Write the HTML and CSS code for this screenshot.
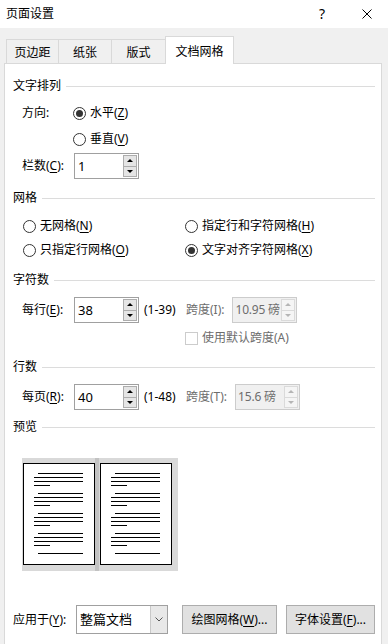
FILE: index.html
```html
<!DOCTYPE html>
<html lang="zh-CN">
<head>
    <meta charset="UTF-8">
    <title>页面设置</title>
    <link rel="stylesheet" href="styles.css">
</head>
<body>
    <div class="titlebar">
        <span class="title">页面设置</span>
        <span class="help">?</span>
        <svg class="close" width="10" height="10" viewBox="0 0 10 10"><path d="M0.5 0.5 L9.5 9.5 M9.5 0.5 L0.5 9.5" stroke="#000" stroke-width="1"/></svg>
    </div>

    <div class="tabs">
        <div class="tab tab-1">页边距</div>
        <div class="tab tab-2">纸张</div>
        <div class="tab tab-3">版式</div>
        <div class="tab tab-active">文档网格</div>
    </div>

    <div class="panel">
        <!-- 文字排列 -->
        <div class="group-title first"><span>文字排列</span><i class="rule"></i></div>
        <div class="row row-dir">
            <span class="label">方向:</span>
            <span class="radio checked"><i class="circle"></i>水平(<u>Z</u>)</span>
        </div>
        <div class="row">
            <span class="label"></span>
            <span class="radio"><i class="circle"></i>垂直(<u>V</u>)</span>
        </div>
        <div class="row row-cols">
            <span class="label">栏数(<u>C</u>):</span>
            <div class="spin">
                <span class="value">1</span>
                <span class="spin-btns"><b class="up"></b><b class="down"></b></span>
            </div>
        </div>

        <!-- 网格 -->
        <div class="group-title grid-title"><span>网格</span><i class="rule"></i></div>
        <div class="radio-row first-radio-row">
            <span class="radio col-1"><i class="circle"></i>无网格(<u>N</u>)</span>
            <span class="radio"><i class="circle"></i>指定行和字符网格(<u>H</u>)</span>
        </div>
        <div class="radio-row">
            <span class="radio col-1"><i class="circle"></i>只指定行网格(<u>O</u>)</span>
            <span class="radio checked"><i class="circle"></i>文字对齐字符网格(<u>X</u>)</span>
        </div>

        <!-- 字符数 -->
        <div class="group-title chars-title"><span>字符数</span><i class="rule"></i></div>
        <div class="row spin-row">
            <span class="label">每行(<u>E</u>):</span>
            <div class="spin">
                <span class="value">38</span>
                <span class="spin-btns"><b class="up"></b><b class="down"></b></span>
            </div>
            <span class="range">(1-39)</span>
            <span class="muted">跨度(I):</span>
            <div class="spin disabled">
                <span class="value">10.95 磅</span>
                <span class="spin-btns"><b class="up"></b><b class="down"></b></span>
            </div>
        </div>
        <div class="check-row">
            <i class="checkbox"></i><span class="muted">使用默认跨度(A)</span>
        </div>

        <!-- 行数 -->
        <div class="group-title lines-title"><span>行数</span><i class="rule"></i></div>
        <div class="row spin-row">
            <span class="label">每页(<u>R</u>):</span>
            <div class="spin">
                <span class="value">40</span>
                <span class="spin-btns"><b class="up"></b><b class="down"></b></span>
            </div>
            <span class="range">(1-48)</span>
            <span class="muted">跨度(T):</span>
            <div class="spin disabled">
                <span class="value">15.6 磅</span>
                <span class="spin-btns"><b class="up"></b><b class="down"></b></span>
            </div>
        </div>

        <!-- 预览 -->
        <div class="group-title preview-title"><span>预览</span><i class="rule"></i></div>
        <div class="preview">
            <div class="page">
                <div class="para"><i class="ln indent"></i><i class="ln"></i><i class="ln"></i><i class="ln short"></i></div>
                <div class="para"><i class="ln indent"></i><i class="ln"></i><i class="ln"></i><i class="ln short"></i></div>
                <div class="para"><i class="ln indent"></i><i class="ln"></i><i class="ln"></i><i class="ln short"></i></div>
                <div class="para"><i class="ln indent"></i><i class="ln"></i><i class="ln"></i><i class="ln short"></i></div>
                <div class="para"><i class="ln indent"></i></div>
            </div>
            <div class="gutter"></div>
            <div class="page">
                <div class="para"><i class="ln indent"></i><i class="ln"></i><i class="ln"></i><i class="ln short"></i></div>
                <div class="para"><i class="ln indent"></i><i class="ln"></i><i class="ln"></i><i class="ln short"></i></div>
                <div class="para"><i class="ln indent"></i><i class="ln"></i><i class="ln"></i><i class="ln short"></i></div>
                <div class="para"><i class="ln indent"></i><i class="ln"></i><i class="ln"></i><i class="ln short"></i></div>
                <div class="para"><i class="ln indent"></i></div>
            </div>
        </div>

        <!-- 底部 -->
        <div class="apply-row">
            <span class="apply-label">应用于(<u>Y</u>):</span>
            <div class="combo">
                <span class="combo-text">整篇文档</span>
                <span class="combo-btn"><svg width="8" height="5" viewBox="0 0 8 5"><path d="M0.5 0.5 L4 4 L7.5 0.5" fill="none" stroke="#555" stroke-width="1"/></svg></span>
            </div>
            <span class="btn btn-draw">绘图网格(<u>W</u>)...</span>
            <span class="btn btn-font">字体设置(<u>F</u>)...</span>
        </div>
    </div>
</body>
</html>
```

FILE: styles.css
```css
/* 页面设置 dialog */
body {
    margin: 0;
    width: 388px;
    height: 644px;
    overflow: hidden;
    background: #f0f0f0;
    font-family: "Noto Sans", "Noto Sans CJK SC", sans-serif;
    font-size: 12px;
    line-height: 16px;
    color: #000;
}

u {
    text-decoration: underline;
    text-underline-offset: 2px;
}

.titlebar {
    height: 28px;
    background: #fff;
    display: flex;
    align-items: center;
    padding-left: 6px;
}

.title {
    flex: 1;
}

.help {
    width: 14px;
    text-align: center;
    font-size: 14px;
    margin-right: 33px;
}

.close {
    margin-right: 16px;
}

/* tabs */
.tabs {
    height: 35px;
    display: flex;
    align-items: flex-end;
    padding-left: 6px;
}

.tab {
    box-sizing: border-box;
    height: 24px;
    padding-top: 2px;
    border: 1px solid #d9d9d9;
    border-bottom: none;
    margin-left: -1px;
    background: #f0f0f0;
    display: flex;
    align-items: center;
    justify-content: center;
}

.tab-1 { width: 53px; margin-left: 0; }
.tab-2 { width: 54px; }
.tab-3 { width: 55px; }

.tab-active {
    width: 69px;
    height: 28px;
    padding-top: 3px;
    margin-bottom: -1px;
    background: #fff;
    position: relative;
    z-index: 1;
}

/* panel */
.panel {
    box-sizing: border-box;
    height: 581px;
    margin: 0 6px 0 4px;
    padding: 0 6px 0 8px;
    background: #fff;
    border: 1px solid #d9d9d9;
    border-bottom: none;
}

.group-title {
    display: flex;
    align-items: center;
    height: 20px;
}

.group-title .rule {
    flex: 1;
    border-top: 1px solid #dcdcdc;
    margin-left: 5px;
}

.group-title.first { margin-top: 12px; }
.grid-title { margin-top: 9px; }
.chars-title { margin-top: 8px; }
.lines-title { margin-top: 9px; }
.preview-title { margin-top: 7px; }

.row {
    display: flex;
    align-items: center;
    height: 26px;
    padding-left: 9px;
}

.row-dir { margin-top: 4px; }
.row-cols { margin-top: 1px; }
.spin-row { margin-top: 7px; }

.label {
    width: 52px;
    flex: none;
}

/* radios */
.radio {
    display: flex;
    align-items: center;
}

.row .radio {
    margin-left: -1px;
}

.circle {
    box-sizing: border-box;
    width: 13px;
    height: 13px;
    border: 1px solid #333;
    border-radius: 50%;
    margin-right: 4px;
    display: flex;
    align-items: center;
    justify-content: center;
}

.checked .circle::after {
    content: "";
    width: 7px;
    height: 7px;
    border-radius: 50%;
    background: #333;
}

.radio-row {
    display: flex;
    align-items: center;
    height: 24px;
    padding-left: 10px;
}

.first-radio-row { margin-top: 6px; }

.col-1 { width: 162px; }

/* spin boxes */
.spin {
    box-sizing: border-box;
    width: 65px;
    height: 26px;
    border: 1px solid #a0a0a0;
    display: flex;
    background: #fff;
}

.spin .value {
    flex: 1;
    padding-left: 3px;
    line-height: 24px;
    font-size: 13px;
    white-space: nowrap;
}

.spin-btns {
    width: 14px;
    margin: 1px 1px 1px 0;
    display: flex;
    flex-direction: column;
}

.spin-btns b {
    flex: 1;
    box-sizing: border-box;
    border: 1px solid #adadad;
    background: #e5e5e5;
    display: flex;
    align-items: center;
    justify-content: center;
}

.spin-btns .down {
    border-top: none;
}

.spin-btns .up::after,
.spin-btns .down::after {
    content: "";
    border-left: 3px solid transparent;
    border-right: 3px solid transparent;
}

.spin-btns .up::after { border-bottom: 3px solid #000; }
.spin-btns .down::after { border-top: 3px solid #000; }

.spin.disabled {
    border-color: #cccccc;
    background: #f0f0f0;
    margin-left: 8px;
}

.spin.disabled .value {
    padding-left: 2px;
    font-size: 12px;
    letter-spacing: -0.2px;
    color: #6d6d6d;
}

.spin.disabled .spin-btns b {
    border-color: #dadada;
    background: #f5f5f5;
}

.spin.disabled .up::after { border-bottom-color: #b5b5b5; }
.spin.disabled .down::after { border-top-color: #b5b5b5; }

.range {
    width: 42px;
    margin-left: 5px;
}

.muted {
    color: #6d6d6d;
}

.check-row {
    display: flex;
    align-items: center;
    height: 20px;
    margin-top: 5px;
    padding-left: 172px;
}

.checkbox {
    box-sizing: border-box;
    width: 13px;
    height: 13px;
    border: 1px solid #cccccc;
    margin-right: 4px;
}

/* preview */
.preview {
    display: flex;
    width: 156px;
    height: 113px;
    box-sizing: border-box;
    margin: 21px 0 0 9px;
    padding: 5px 6px 6px 1px;
    background: #d9d9d9;
}

.page {
    box-sizing: border-box;
    width: 72px;
    height: 102px;
    border: 1px solid #000;
    background: #fff;
    padding: 9px 0 0 10px;
}

.gutter {
    width: 5px;
    margin: -5px 1px -6px 0;
    background: #c2c2c2;
}

.para {
    margin-bottom: 7px;
}

.ln {
    display: block;
    width: 49px;
    height: 1px;
    margin-bottom: 3px;
    background: #000;
}

.ln:last-child {
    margin-bottom: 0;
}

.ln.indent {
    width: 45px;
    margin-left: 4px;
}

.ln.short {
    width: 16px;
}

/* bottom */
.apply-row {
    display: flex;
    align-items: center;
    height: 29px;
    margin-top: 34px;
}

.apply-label {
    width: 63px;
}

.combo {
    box-sizing: border-box;
    width: 92px;
    height: 29px;
    border: 1px solid #a0a0a0;
    display: flex;
}

.combo-text {
    flex: 1;
    padding-left: 3px;
    line-height: 27px;
    font-size: 13px;
}

.combo-btn {
    width: 16px;
    border-left: 1px solid #c8c8c8;
    background: #e8e8e8;
    display: flex;
    align-items: center;
    justify-content: center;
}

.btn {
    box-sizing: border-box;
    height: 29px;
    border: 1px solid #adadad;
    background: #e1e1e1;
    display: flex;
    align-items: center;
    justify-content: center;
}

.btn-draw {
    width: 95px;
    margin-left: 14px;
}

.btn-font {
    width: 89px;
    margin-left: 9px;
}
```
